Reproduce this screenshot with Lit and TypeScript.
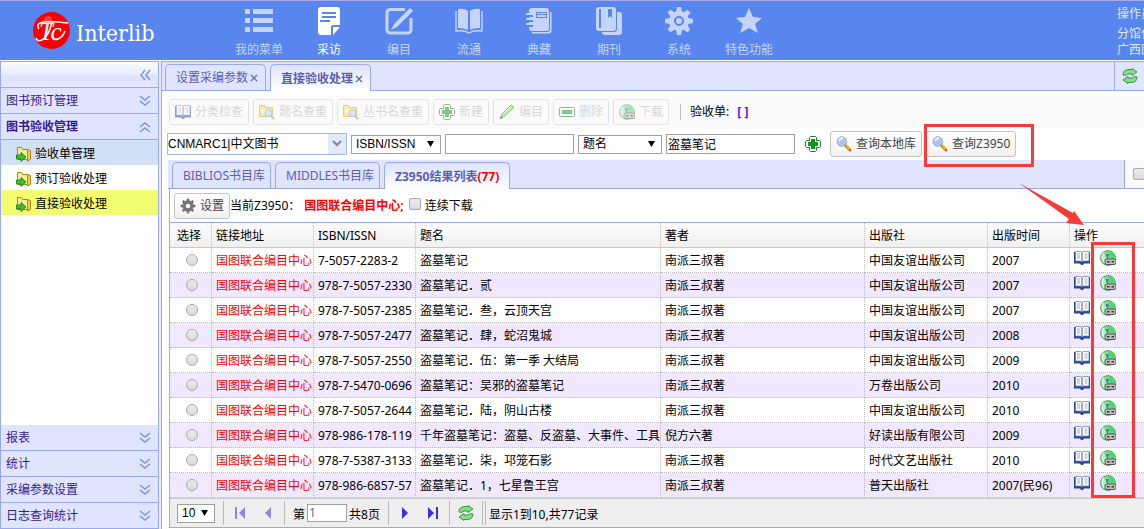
import { LitElement, html, css, svg } from "lit";
import { customElement } from "lit/decorators.js";
import { classMap } from "lit/directives/class-map.js";

/* ---------- icons ---------- */

const navIcons: Record<string, unknown> = {
  list: svg`<path d="M0 2h5v5H0zM8 2h20v5H8zM0 11h5v5H0zM8 11h20v5H8zM0 20h5v5H0zM8 20h20v5H8z"/>`,
  doc: svg`<path fill-rule="evenodd" d="M6 0h16a3 3 0 0 1 3 3v15h-7a2 2 0 0 0-2 2v8H6a3 3 0 0 1-3-3V3a3 3 0 0 1 3-3zM7 5v2h14V5zM7 9v2h14V9zM5 13v2h10v-2z"/><path d="M18 20h7l-7 8z"/>`,
  edit: svg`<path d="M20 2.500H5A3.500 3.500 0 0 0 2 6v17a3.500 3.500 0 0 0 3 3h18a3 3 0 0 0 3-3V11" fill="none" stroke="currentColor" stroke-width="3"/><path d="M25 1l3 3L12 20l-6 3 3-6z"/>`,
  book: svg`<path d="M3 2q6-1 10 2v19q-4-2-10-2zM25 2q-6-1-10 2v19q4-2 10-2z"/><path d="M1 4v20q8-1 13 2 5-3 13-2V4" fill="none" stroke="currentColor" stroke-width="1.400"/>`,
  note: svg`<path fill-rule="evenodd" d="M7 1h14a3 3 0 0 1 3 3v17a3 3 0 0 1-3 3H7a3 3 0 0 1-3-3v-1h4v-2H4v-3h4v-2H4v-3h4V8H4V4a3 3 0 0 1 3-3zM11 5v6h11V5zM12 6h9v1h-9zM12 8h9v2h-9z"/><path d="M1 6h6v2H1zM1 11h6v2H1zM1 16h6v2H1zM25 5h1.500v18.500a3 3 0 0 1-3 3H7V25h15a3 3 0 0 0 3-3z"/>`,
  journal: svg`<path fill-rule="evenodd" d="M4 0h14a3 3 0 0 1 3 3v18a3 3 0 0 1-3 3H4a3 3 0 0 1-3-3V3a3 3 0 0 1 3-3zM4 2v19h2V2zM13 2v9l2-2 2 2V2z"/><path d="M22 5h2a3 3 0 0 1 3 3v17a3 3 0 0 1-3 3H10a3 3 0 0 1-3-3h12a3 3 0 0 0 3-3z"/>`,
  gear: svg`<circle cx="14" cy="14" r="7.500" fill="none" stroke="currentColor" stroke-width="5"/><circle cx="14" cy="14" r="3"/><g>${[0, 45, 90, 135, 180, 225, 270, 315].map(
    (a) => svg`<path d="M11 5l1-5h4l1 5z" transform="rotate(${a} 14 14)"/>`
  )}</g>`,
  star: svg`<path d="M14 1l4 9 9 1-7 6 3 9-9-5-9 5 3-9-7-6 9-1z"/>`,
};

const bookIcon = (cls = "") => html`<svg class="i16 ${cls}" viewBox="0 0 16 16">
  <path d="M0 2h16v11.500h-6L9 15H7l-1-1.500H0z" fill="#2a4a94"/><path d="M1.500 1.500H6q1.500 0 2 1 .5-1 2-1h5v9.500h-5q-1.500 0-2 1-.5-1-2-1h-4.500z" fill="#fff" stroke="#5f77b5" stroke-width=".7"/>
  <path d="M3 4h3M3 6h3M3 8h3M10.500 4h3M10.500 6h3M10.500 8h3" stroke="#a8a8a8"/><path d="M8 2.500v9" stroke="#7c86a4" stroke-width="1.400"/></svg>`;

const globeIcon = () => html`<svg class="i16" viewBox="0 0 16 16">
  <circle cx="8" cy="8" r="7.500" fill="#7cc98a" stroke="#4aa355" stroke-width=".8"/><path d="M9 1a7 7 0 0 1 6 6l-3 1-3-3 1-2z" fill="#3fe05f"/>
  <path d="M2 5l4-3 2 2-2 3 1 3-3 3Q0 9 2 5z" fill="#a9edac"/><path d="M5 3.500l4 1-1.500 4z" fill="#3b78c2"/><path d="M3.500 3Q1 8 4.500 13" fill="none" stroke="#effff0" stroke-width="1.300"/>
  <path d="M5 11q0-2 2-2h7q2 0 2 2v1.500q0 2-2 2H7q-2 0-2-2z" fill="#c4c4c4" stroke="#505050"/><path d="M7 11.800h2.500M11.500 11.800H14" stroke="#333" stroke-width="1.600"/></svg>`;

const folderSearchIcon = () => html`<svg class="i16" viewBox="0 0 16 16">
  <path d="M.5 1.500h5l1 2h7v9H.5z" fill="#f7e04c" stroke="#c9a227"/><path d="M2 6h10M2 8h5" stroke="#fffbd0" stroke-width="1.300"/>
  <circle cx="9.500" cy="9" r="3.500" fill="#b8d4ff" stroke="#6d8fd4"/><path d="M12 12l3 3" stroke="#d98a1f" stroke-width="2"/></svg>`;

const plusIcon = () => html`<svg class="i16" viewBox="0 0 16 16">
  <path d="M5.500.5h5l1 1v3h3l1 1v5l-1 1h-3v3l-1 1h-5l-1-1v-3h-3l-1-1v-5l1-1h3v-3z" fill="#fff" stroke="#1f7a2c"/><path d="M6 3h4v3h3v4h-3v3H6v-3H3V6h3z" fill="#079a12"/></svg>`;

const pencilIcon = () => html`<svg class="i16" viewBox="0 0 16 16">
  <path d="M1 15l2-5L12 1l3 2-9 9z" fill="#8be04a" stroke="#3d8a1f"/><path d="M4 10l8-8" stroke="#d6ffb0"/><path d="M1 15l1-3 2 2z" fill="#335"/></svg>`;

const minusIcon = () => html`<svg class="i16" viewBox="0 0 16 16">
  <rect x=".5" y="3.500" width="15" height="9" rx="1" fill="#fff" stroke="#1f7a2c"/><rect x="3" y="6" width="10" height="4" fill="#079a12"/></svg>`;

const searchIcon = () => html`<svg class="i16" viewBox="0 0 16 16">
  <path d="M9 9l5 5" stroke="#a8792a" stroke-width="2.600"/><path d="M10 9.500l4 4" stroke="#ffb400" stroke-width="1.800"/><path d="M13.500 13.500l1.500 1.500" stroke="#c44" stroke-width="2"/>
  <circle cx="5.800" cy="5.500" r="4.700" fill="#a9c9f8" stroke="#9aa6cc"/><path d="M3 5q1-3 4-3" stroke="#fff" fill="none" stroke-width="1.300"/></svg>`;

const gearIcon = () => html`<svg class="i16" viewBox="0 0 16 16" fill="#777">
  <circle cx="8" cy="8" r="4" fill="none" stroke="#777" stroke-width="3.400"/>${[0, 45, 90, 135, 180, 225, 270, 315].map(
    (a) => svg`<path d="M6.500 3l.5-2.500h2l.5 2.500z" transform="rotate(${a} 8 8)"/>`
  )}</svg>`;

const refreshIcon = () => html`<svg class="i16" viewBox="0 0 16 16" fill="#86dd82" stroke="#2e8b3a" stroke-width=".9" stroke-linejoin="round">
  <path d="M1 7q0-5.500 6-5.500h3V.5L15 4l-5 3.500V6H7Q4 6 4 7.500z"/><path d="M15 9q0 5.500-6 5.500H6v1L1 12l5-3.500V10h3q3 0 3-1.500z"/></svg>`;

const folderGoIcon = () => html`<svg class="i16" viewBox="0 0 16 16">
  <path d="M1.500 1.500h4l1 2h5v10h-10z" fill="#f8ec9a" stroke="#b08a10"/><path d="M11.500 3.500l3 1v9l-3 1.500z" fill="#e8cf5a" stroke="#b08a10"/>
  <path d="M.5 9H5V6.500l5 4.500-5 4.500V13H.5z" fill="#33c726" stroke="#13760c" stroke-width=".8"/></svg>`;

const chevrons = (dir: string) => html`<svg class="chev" viewBox="0 0 12 12" fill="none" stroke="#7593ea" stroke-width="1.400">
  ${dir === "down" ? svg`<path d="M1 1l5 4 5-4M1 6l5 4 5-4"/>` : dir === "up" ? svg`<path d="M1 6l5-4 5 4M1 11l5-4 5 4"/>` : svg`<path d="M6 1L2 6l4 5M11 1L7 6l4 5"/>`}</svg>`;

const crossIcon = () => html`<svg class="cross" viewBox="0 0 8 8"><path d="M1 1l6 6M7 1L1 7" stroke="#5a62b0" stroke-width="1.200"/></svg>`;

/* ---------- data ---------- */

const nav = [
  ["list", "我的菜单"], ["doc", "采访"], ["edit", "编目"], ["book", "流通"],
  ["note", "典藏"], ["journal", "期刊"], ["gear", "系统"], ["star", "特色功能"],
];

const link = "国图联合编目中心";
const records = [
  ["7-5057-2283-2", "盗墓笔记", "南派三叔著", "中国友谊出版公司", "2007"],
  ["978-7-5057-2330", "盗墓笔记．贰", "南派三叔著", "中国友谊出版公司", "2007"],
  ["978-7-5057-2385", "盗墓笔记．叁，云顶天宫", "南派三叔著", "中国友谊出版公司", "2007"],
  ["978-7-5057-2477", "盗墓笔记．肆，蛇沼鬼城", "南派三叔著", "中国友谊出版公司", "2008"],
  ["978-7-5057-2550", "盗墓笔记．伍：第一季 大结局", "南派三叔著", "中国友谊出版公司", "2009"],
  ["978-7-5470-0696", "盗墓笔记：吴邪的盗墓笔记", "南派三叔著", "万卷出版公司", "2010"],
  ["978-7-5057-2644", "盗墓笔记．陆，阴山古楼", "南派三叔著", "中国友谊出版公司", "2010"],
  ["978-986-178-119", "千年盗墓笔记：盗墓、反盗墓、大事件、工具", "倪方六著", "好读出版有限公司", "2009"],
  ["978-7-5387-3133", "盗墓笔记．柒，邛笼石影", "南派三叔著", "时代文艺出版社", "2010"],
  ["978-986-6857-57", "盗墓笔记．1，七星鲁王宫", "南派三叔著", "普天出版社", "2007(民96)"],
];

@customElement("app-root")
export class AppRoot extends LitElement {
  static styles = css`
    :host {
      display: flex;
      flex-direction: column;
      position: relative;
      min-height: 100vh;
      overflow: hidden;
      background: #fff;
      color: #000;
      font: 12px/18px "Noto Sans", "Noto Sans CJK SC", sans-serif;
    }
    * { box-sizing: border-box; }
    svg { display: block; flex: none; }
    button, input, select { font: inherit; color: inherit; margin: 0; }
    button { cursor: pointer; white-space: nowrap; }
    .i16 { width: 16px; height: 16px; }
    .chev { width: 12px; height: 12px; }
    .cross { width: 8px; height: 8px; }

    /* header */
    header {
      display: flex;
      height: 61px;
      background: #5886ee;
      border-top: 1px solid #a2aaf0;
      border-bottom: 1px solid #fff;
    }
    .brand { display: flex; align-items: center; gap: 6px; width: 224px; padding-left: 33px; color: #fff; }
    .brand svg { width: 37px; height: 37px; }
    .brand .name { font: 23px/32px "DejaVu Serif Condensed", "DejaVu Serif", serif; padding-top: 4px; }
    nav { display: flex; }
    nav a {
      width: 70px;
      display: flex;
      flex-direction: column;
      align-items: center;
      gap: 6px;
      padding-top: 6px;
      color: #c5d5f9;
      text-decoration: none;
      white-space: nowrap;
    }
    nav a.on { color: #fff; }
    nav svg { width: 28px; height: 28px; fill: currentColor; }
    .user {
      margin-left: auto;
      width: 27px;
      overflow: hidden;
      white-space: nowrap;
      color: #dfe8fd;
      padding-top: 5px;
      line-height: 16px;
    }
    .user div:first-child { margin-bottom: 4px; }

    /* body */
    .body { display: flex; flex: 1; gap: 2px; background: #e8ebff; }
    aside {
      width: 159px;
      flex: none;
      display: flex;
      flex-direction: column;
      background: #fff;
      border: solid #99a8ef;
      border-width: 1px 1px 0;
    }
    .fold, .side-head {
      display: flex;
      align-items: center;
      justify-content: space-between;
      height: 26px;
      padding: 0 7px 0 5px;
      border: 0;
      border-bottom: 1px solid #99a8ef;
      background: #e0e5ff;
      color: #371a92;
    }
    .fold.open { font-weight: bold; }
    .side-head { justify-content: flex-end; background: linear-gradient(#fbfcff, #e9ecff 50%, #dde1fe 55%, #e4e8ff); }
    .side-head button { padding: 0; border: 0; background: none; }
    .leaf {
      display: flex;
      align-items: center;
      gap: 3px;
      height: 25px;
      padding: 3px 0 0 15px;
      color: #000;
      text-decoration: none;
      line-height: 22px;
    }
    .leaf.sel { background: #d0e0f5; }
    .leaf.hot { background: #f2fd70; }
    .spacer { flex: 1; }

    main { flex: 1; min-width: 0; background: #fff; border: solid #99a8ef; border-width: 1px 0 0 1px; }
    .tabs { display: flex; align-items: flex-end; gap: 4px; background: #e0e5ff; border-bottom: 1px solid #99a8ef; }
    .tabs button {
      display: flex;
      align-items: center;
      gap: 2px;
      height: 26px;
      padding: 1px 5px 0 10px;
      border: 1px solid #99a8ef;
      border-bottom: 0;
      border-radius: 5px 5px 0 0;
      background: #e0e5ff;
      color: #5a5fae;
    }
    .tabs button.on { font-weight: bold; height: 27px; margin-bottom: -1px; background: linear-gradient(#dde3ff, #fff); }
    .tabs.top { height: 29px; padding-left: 3px; }
    .tabs.top button { padding-right: 7px; }
    .corner { align-self: stretch; margin-left: auto; display: flex; align-items: center; border-left: 1px solid #99a8ef; }
    .corner.refresh { width: 30px; padding-left: 7px; }
    .corner.check { width: 20px; padding-left: 8px; background: #fafafa; }
    .red { color: #f00; }

    .toolbar {
      display: flex;
      align-items: center;
      gap: 4px;
      height: 32px;
      margin: 5px 0 0 4px;
      padding-left: 3px;
      background: #fafafa;
    }
    .btn {
      display: flex;
      align-items: center;
      gap: 4px;
      height: 26px;
      padding: 0 5px;
      border: 1px solid #c4c4c4;
      border-radius: 3px;
      background: linear-gradient(#fff, #f1f1f1);
      color: #444;
    }
    .btn:disabled { opacity: .5; border-color: #ccc; background: #fafafa; color: #b8b8b8; cursor: default; }
    .rule { width: 1px; height: 16px; background: #bbb; margin: 0 5px 0 7px; }
    .toolbar b { color: #60f; margin-left: 4px; }

    .query { display: flex; align-items: center; gap: 4px; height: 32px; padding-left: 5px; }
    .pick {
      appearance: none;
      height: 19px;
      padding: 0 18px 0 4px;
      border: 1px solid #a0a0a0;
      border-radius: 0;
      background: #fff url("data:image/svg+xml,%3Csvg xmlns='http://www.w3.org/2000/svg' width='7' height='6'%3E%3Cpath d='M0 0h7L3.500 6z'/%3E%3C/svg%3E") no-repeat right 6px center;
      font: 12px/16px "Liberation Sans", "Noto Sans CJK SC", sans-serif;
    }
    .combo {
      width: 180px;
      height: 22px;
      padding-left: 0;
      border-color: #a3bae9;
      background: url("data:image/svg+xml,%3Csvg xmlns='http://www.w3.org/2000/svg' width='18' height='20'%3E%3Cpath fill='%23e2e8fd' d='M0 0h18v20H0z'/%3E%3Cpath d='M5 7l4 4 4-4' fill='none' stroke='%23888' stroke-width='2'/%3E%3C/svg%3E") no-repeat right center;
    }
    .w90 { width: 90px; }
    .w84 { width: 84px; }
    .text { width: 129px; height: 20px; padding: 0 1px; border: 1px solid #a0a0a0; background: #fff; }
    .plain { display: flex; align-items: center; justify-content: center; padding: 0; border: 0; background: none; }
    .add { width: 27px; }

    .tabs.inner { height: 29px; margin-left: 6px; padding-left: 4px; }
    .tabs.inner button.on { padding-right: 10px; }
    .panel { margin-left: 7px; border-left: 1px solid #99a8ef; border-bottom: 1px solid #99a8ef; }
    .status { display: flex; align-items: center; height: 33px; padding: 1px 0 0 4px; }
    .status .red { margin: 0 5px 0 4px; }
    .status label { margin-left: 4px; }
    input[type="checkbox"], input[type="radio"] {
      appearance: none;
      flex: none;
      width: 12px;
      height: 12px;
      border: 1px solid #aaa;
      border-radius: 2px;
      background: linear-gradient(#ececec, #dadada);
    }
    input[type="radio"] { display: block; margin: 0 auto; border-radius: 50%; }
    .status input { margin-bottom: 4px; }

    table { width: 100%; table-layout: fixed; border-spacing: 0; border-top: 1px solid #99a8ef; }
    th, td {
      height: 25px;
      padding: 2px 0 0 4px;
      text-align: left;
      font-weight: normal;
      white-space: nowrap;
      overflow: hidden;
      border-right: 1px dotted #bbb;
      border-bottom: 1px dotted #bbb;
    }
    th { background: linear-gradient(#fcfcfc, #f0f0f0); border-bottom: 1px solid #c8c8c8; }
    th:first-child { padding-left: 7px; }
    td:first-child { padding: 0 0 0 2px; }
    td:last-child { padding-top: 0; }
    th:last-child, td:last-child { border-right: 0; }
    tbody tr:nth-child(even) { background: #f0e8ff; }
    .c1 { width: 42px; } .c2, .c3 { width: 102px; } .c4 { width: 245px; } .c5 { width: 204px; } .c6 { width: 123px; } .c7 { width: 82px; }
    .ops { display: flex; gap: 10px; padding-bottom: 5px; }

    .pager { display: flex; align-items: center; height: 29px; padding-left: 7px; background: #eee; border-top: 1px solid #ccc; }
    .pager .pick { width: 38px; }
    .pager .text { width: 40px; height: 18px; margin: 0 2px; color: #4a74a8; }
    .pager label, .pager .note { padding-top: 3px; }
    .bar { width: 1px; height: 24px; background: #bbb; margin: 0 8px; }
    .bar.near { margin-right: 0; }
    .bar.end { margin: 0 3px 0 2px; }
    .pg { width: 16px; height: 16px; }
    .pg.gap { margin-left: 12px; }

    .marks { position: absolute; left: 0; top: 0; width: 1144px; height: 529px; pointer-events: none; }
  `;

  private fold(label: string, open = false) {
    return html`<button class=${classMap({ fold: true, open })}>${label}${chevrons(open ? "up" : "down")}</button>`;
  }

  private tool(icon: unknown, label: string, disabled = true) {
    return html`<button class="btn" ?disabled=${disabled}>${icon}<span>${label}</span></button>`;
  }

  private pageIcon(label: string, path: string, fill: string, cls = "") {
    return html`<button class="plain pg ${cls}" aria-label=${label}>
      <svg class="i16" viewBox="0 0 16 16"><path d=${path} fill=${fill}/></svg>
    </button>`;
  }

  render() {
    return html`
      <header>
        <div class="brand">
          <svg viewBox="0 0 37 37">
            <circle cx="18.500" cy="18.500" r="18.500" fill="#fb0000"/>
            <circle cx="15" cy="8" r="4" fill="#ff6a5a" opacity=".6"/>
            <path d="M6 17q-4-6 5-7 8-1 24 1M19 10q-3 14-10 18-5 2-6-2M20 24q0 5 5 3 5-2 7-8" fill="none" stroke="#fff" stroke-width="1.500"/>
            <text x="6" y="28" font-family="Liberation Serif, serif" font-style="italic" font-size="25" fill="#fff">Tc</text>
          </svg>
          <span class="name">Interlib</span>
        </div>
        <nav>
          ${nav.map(([icon, label], i) => html`<a href="#" class=${classMap({ on: i === 1 })}>
            <svg viewBox="0 0 28 28">${navIcons[icon]}</svg><span>${label}</span></a>`)}
        </nav>
        <div class="user"><div>操作员</div><div>分馆代</div><div>广西图</div></div>
      </header>

      <div class="body">
        <aside>
          <div class="side-head"><button aria-label="收起">${chevrons("left")}</button></div>
          ${this.fold("图书预订管理")}
          ${this.fold("图书验收管理", true)}
          <a class="leaf sel" href="#">${folderGoIcon()}验收单管理</a>
          <a class="leaf" href="#">${folderGoIcon()}预订验收处理</a>
          <a class="leaf hot" href="#">${folderGoIcon()}直接验收处理</a>
          <div class="spacer"></div>
          ${["报表", "统计", "采编参数设置", "日志查询统计"].map((t) => this.fold(t))}
        </aside>

        <main>
          <div class="tabs top">
            <button>设置采编参数${crossIcon()}</button>
            <button class="on">直接验收处理${crossIcon()}</button>
            <div class="corner refresh">${refreshIcon()}</div>
          </div>

          <div class="toolbar">
            ${this.tool(bookIcon(), "分类检查")}
            ${this.tool(folderSearchIcon(), "题名查重")}
            ${this.tool(folderSearchIcon(), "丛书名查重")}
            ${this.tool(plusIcon(), "新建")}
            ${this.tool(pencilIcon(), "编目")}
            ${this.tool(minusIcon(), "删除")}
            ${this.tool(globeIcon(), "下载")}
            <span class="rule"></span>
            <span>验收单:</span><b>[ ]</b>
          </div>

          <div class="query">
            <select class="pick combo" aria-label="书目库"><option>CNMARC1|中文图书</option></select>
            <select class="pick w90" aria-label="检索字段一"><option>ISBN/ISSN</option></select>
            <input class="text" type="text" aria-label="检索词一" />
            <select class="pick w84" aria-label="检索字段二"><option>题名</option></select>
            <input class="text" type="text" aria-label="检索词二" .value=${"盗墓笔记"} />
            <button class="plain add" aria-label="添加条件">${plusIcon()}</button>
            ${this.tool(searchIcon(), "查询本地库", false)}
            ${this.tool(searchIcon(), "查询Z3950", false)}
          </div>

          <div class="tabs inner">
            <button>BIBLIOS书目库</button>
            <button>MIDDLES书目库</button>
            <button class="on"><span>Z3950结果列表<span class="red">(77)</span></span></button>
            <div class="corner check"><input type="checkbox" aria-label="选项" /></div>
          </div>

          <div class="panel">
            <div class="status">
              ${this.tool(gearIcon(), "设置", false)}
              <span>当前Z3950：</span><b class="red">国图联合编目中心;</b>
              <input id="keep" type="checkbox" /><label for="keep">连续下载</label>
            </div>

            <table>
              <colgroup>
                <col class="c1" /><col class="c2" /><col class="c3" /><col class="c4" />
                <col class="c5" /><col class="c6" /><col class="c7" /><col />
              </colgroup>
              <thead>
                <tr>${["选择", "链接地址", "ISBN/ISSN", "题名", "著者", "出版社", "出版时间", "操作"].map((h) => html`<th>${h}</th>`)}</tr>
              </thead>
              <tbody>
                ${records.map((r) => html`<tr>
                  <td><input type="radio" name="record" aria-label=${r[1]} /></td>
                  <td class="red">${link}</td>
                  ${r.map((v) => html`<td>${v}</td>`)}
                  <td><div class="ops">${bookIcon()}${globeIcon()}</div></td>
                </tr>`)}
              </tbody>
            </table>

            <div class="pager">
              <select class="pick" aria-label="每页条数"><option>10</option></select>
              <span class="bar"></span>
              ${this.pageIcon("首页", "M3 2h2v12H3zM13 2v12L7 8z", "#8f86dd")}
              ${this.pageIcon("上一页", "M11 2v12L5 8z", "#8f86dd", "gap")}
              <span class="bar"></span>
              <label for="page">第</label><input id="page" class="text" type="text" .value=${"1"} /><span class="note">共8页</span>
              <span class="bar"></span>
              ${this.pageIcon("下一页", "M5 2v12l6-6z", "#3c2fe0")}
              ${this.pageIcon("末页", "M3 2v12l6-6zM11 2h2v12h-2z", "#3c2fe0", "gap")}
              <span class="bar"></span>
              <button class="plain" aria-label="刷新">${refreshIcon()}</button>
              <span class="bar near"></span><span class="bar end"></span>
              <span class="note">显示1到10,共77记录</span>
            </div>
          </div>
        </main>
      </div>

      <svg class="marks" viewBox="0 0 1144 529" fill="none" stroke="#fb3a38" stroke-width="3">
        <rect x="925.500" y="125.500" width="107" height="40"/>
        <rect x="1092.500" y="243.500" width="41" height="253"/>
        <path d="M1019 183l54 30 1-2 10 14-18-2 3-4z" fill="#fb3a38" stroke="none"/>
      </svg>
    `;
  }
}
